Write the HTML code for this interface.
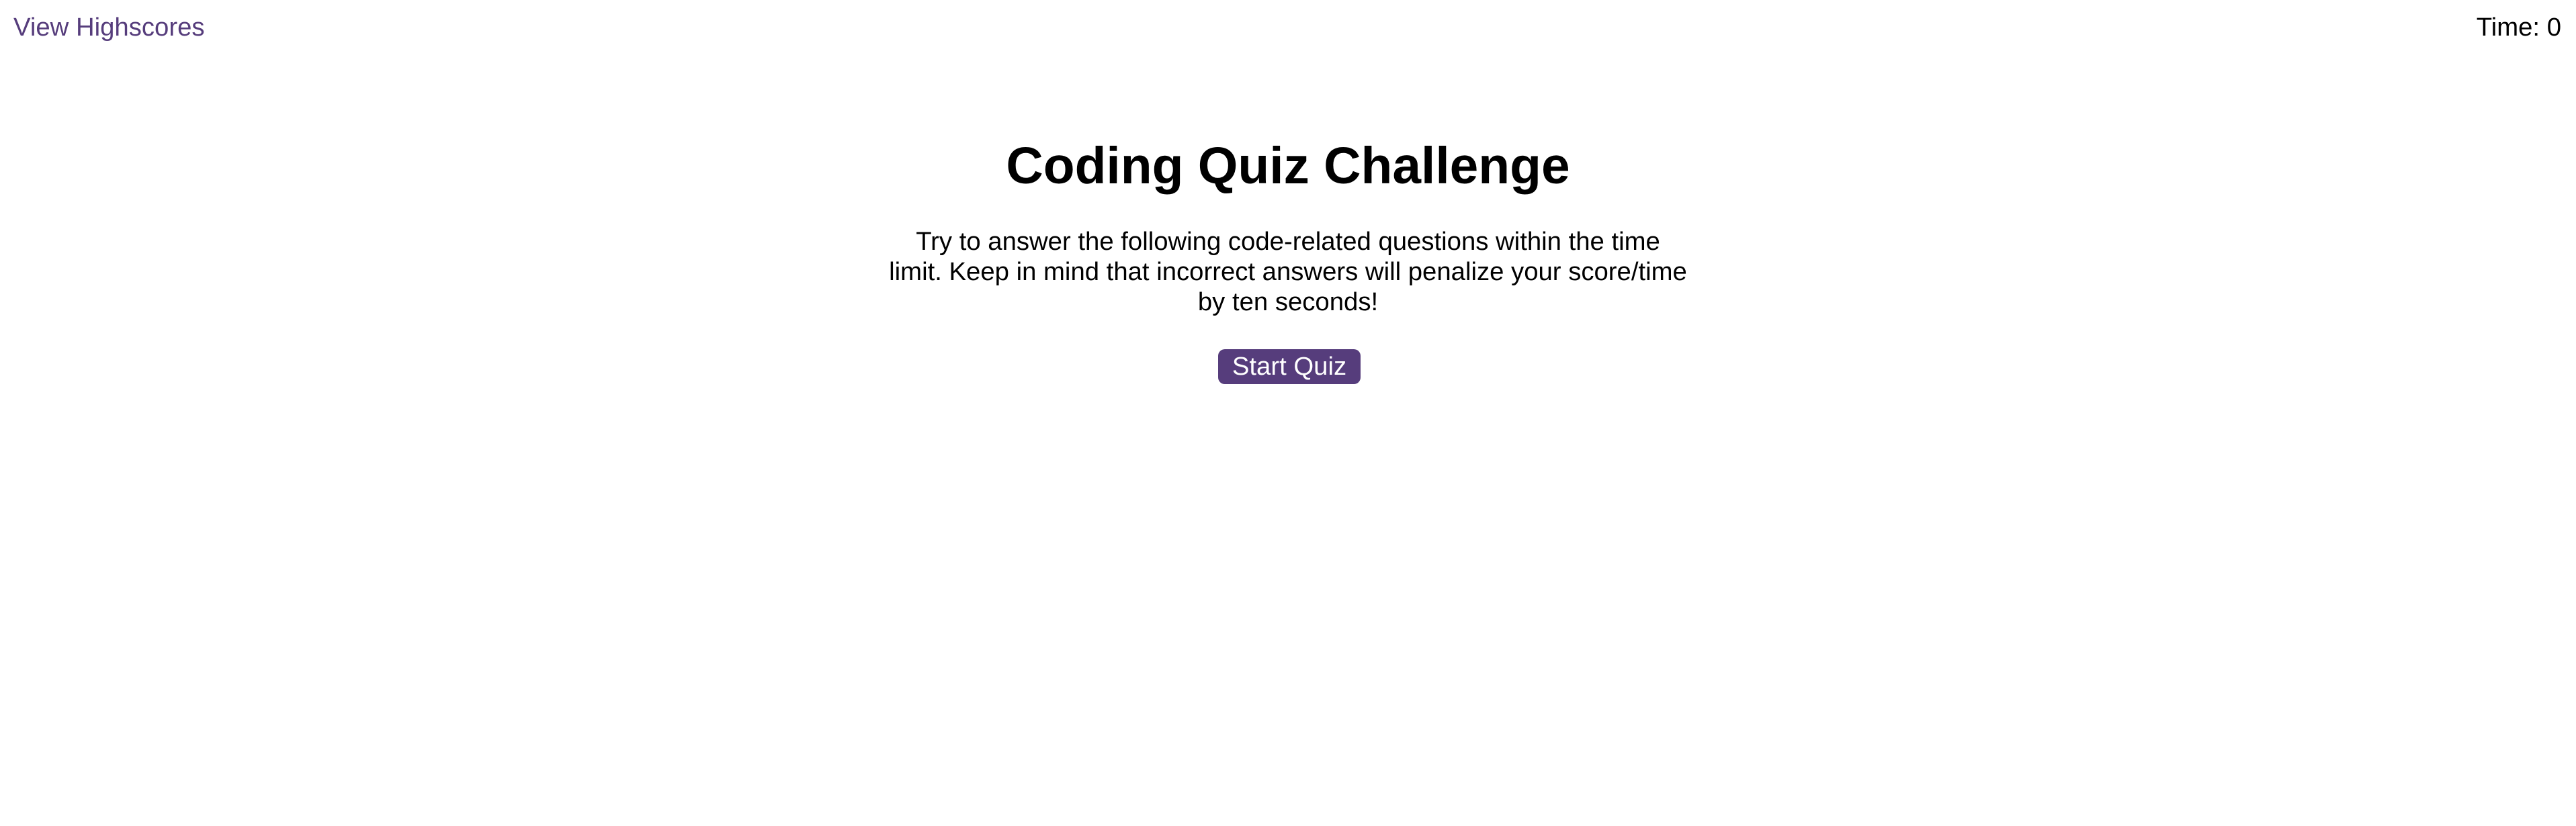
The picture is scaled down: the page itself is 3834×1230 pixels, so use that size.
<!DOCTYPE html>
<html><head><style>
html,body{margin:0;padding:0;background:#fff;width:3834px;height:1230px;overflow:hidden;font-family:"Liberation Sans",Arial,sans-serif;}
.a{position:absolute;white-space:nowrap;font-size:38.3px;line-height:45px;}
#hs{left:20px;top:18px;color:#563d7c;}
#tm{right:22px;top:18px;color:#000;}
h1{position:absolute;left:0;width:3834px;top:203px;margin:0;text-align:center;font-size:76.7px;line-height:90px;font-weight:bold;color:#000;}
p{position:absolute;left:0;width:3834px;top:337px;margin:0;text-align:center;font-size:38.3px;line-height:45px;color:#000;white-space:nowrap;}
.btn{position:absolute;left:1813px;top:520px;width:212px;height:52px;background:#563d7c;border-radius:10px;color:#fff;font-size:38.3px;line-height:52px;text-align:center;}
</style></head><body>
<div class="a" id="hs">View Highscores</div>
<div class="a" id="tm">Time: 0</div>
<h1>Coding Quiz Challenge</h1>
<p>Try to answer the following code-related questions within the time<br>limit. Keep in mind that incorrect answers will penalize your score/time<br>by ten seconds!</p>
<div class="btn">Start Quiz</div>
</body></html>
